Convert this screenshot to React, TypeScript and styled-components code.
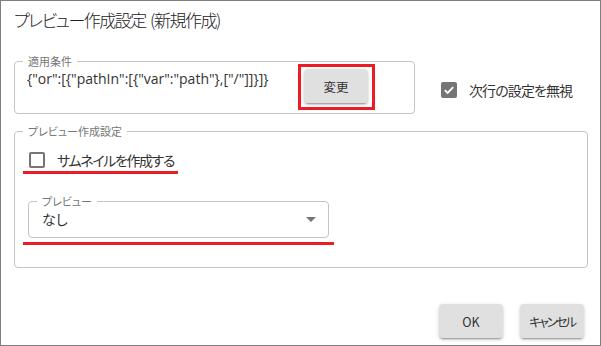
import React from "react";
import styled, { createGlobalStyle } from "styled-components";

const Global = createGlobalStyle`
  html, body { margin: 0; padding: 0; background: #fff; }
  body { font-family: "Noto Sans CJK JP", "Noto Sans", sans-serif; }
`;

const Frame = styled.div`
  width: 601px;
  height: 346px;
  box-sizing: border-box;
  border: 1px solid #7f7f7f;
  background: #fff;
  display: flex;
  flex-direction: column;
  color: #333;
  font-feature-settings: "palt" 1;
`;

const Title = styled.div`
  font-size: 17px;
  font-weight: 300;
  letter-spacing: -1.5px;
  word-spacing: 2px;
  line-height: 26px;
  padding: 6px 0 0 13px;
  color: #222;
`;

const TopRow = styled.div`
  display: flex;
  align-items: center;
  margin: 28px 0 0 13px;
`;

const Outlined = styled.div`
  position: relative;
  box-sizing: border-box;
  border: 1px solid #c4c4c4;
  border-radius: 4px;
`;

const Legend = styled.span`
  position: absolute;
  top: -8px;
  left: 8px;
  padding: 0 5px;
  background: #fff;
  font-size: 11px;
  line-height: 14px;
  color: #767676;
  white-space: nowrap;
`;

const ConditionBox = styled(Outlined)`
  width: 401px;
  height: 53px;
  display: flex;
  align-items: flex-start;
  padding: 0 39px 0 12px;
`;

const ConditionText = styled.span`
  padding-top: 7px;
  font-family: "Open Sans", "Noto Sans CJK JP", sans-serif;
  font-size: 14px;
  line-height: 20px;
  white-space: nowrap;
  color: #333;
`;

const Highlight = styled.div`
  margin-left: auto;
  margin-top: 2px;
  border: 3px solid #ed1c24;
  padding: 2px 4px 4px 3px;
  display: flex;
`;

const Button = styled.button<{ $spacing?: number }>`
  height: 34px;
  min-width: 64px;
  padding: 0 8px;
  border: none;
  border-radius: 4px;
  background: #e0e0e0;
  color: #333;
  font-family: "Noto Sans CJK JP", sans-serif;
  font-feature-settings: "palt" 1;
  font-size: 12.5px;
  letter-spacing: ${(p) => p.$spacing ?? 0}px;
  box-shadow: 0 3px 1px -2px rgba(0, 0, 0, 0.2), 0 2px 2px 0 rgba(0, 0, 0, 0.14),
    0 1px 5px 0 rgba(0, 0, 0, 0.12);
  cursor: pointer;
`;

const CheckLabel = styled.label<{ $spacing: number }>`
  display: flex;
  align-items: center;
  gap: 12px;
  font-size: 14px;
  letter-spacing: ${(p) => p.$spacing}px;
  line-height: 20px;
  color: #333;
  white-space: nowrap;
`;

const IgnoreGroup = styled.div`
  margin: 4px 0 0 26px;
`;

const Box = styled.span<{ $checked: boolean }>`
  width: 16px;
  height: 16px;
  box-sizing: border-box;
  border-radius: 2px;
  border: 2px solid #757575;
  background: ${(p) => (p.$checked ? "#757575" : "transparent")};
  display: flex;
  align-items: center;
  justify-content: center;
  flex: none;
`;

const SettingsBox = styled(Outlined)`
  margin: 17px 12px 0 13px;
  padding: 18px 0 22px 8px;
`;

const Underline = styled.div<{ $pad: string }>`
  width: fit-content;
  padding: ${(p) => p.$pad};
  border-bottom: 3px solid #ed1c24;
`;

const SelectWrap = styled(Underline)`
  margin-top: 27px;
`;

const Select = styled(Outlined)`
  width: 301px;
  height: 37px;
  display: flex;
  align-items: center;
  padding: 0 12px 2px 13px;
  font-size: 14px;
  color: #333;
`;

const Arrow = styled.svg`
  margin-left: auto;
  width: 24px;
  height: 24px;
  fill: #757575;
  margin-right: -7px;
`;

const Footer = styled.div`
  margin-top: auto;
  display: flex;
  justify-content: flex-end;
  gap: 17px;
  padding: 0 16px 7px 0;
`;

function Check({ checked }: { checked: boolean }) {
  return (
    <Box $checked={checked}>
      {checked && (
        <svg width="12" height="12" viewBox="0 0 12 12">
          <path d="M1.8 6.2 L4.6 9 L10.2 3.2" stroke="#fff" strokeWidth="1.8" fill="none" />
        </svg>
      )}
    </Box>
  );
}

export default function App() {
  return (
    <>
      <Global />
      <Frame>
        <Title>プレビュー作成設定 (新規作成)</Title>
        <TopRow>
          <ConditionBox>
            <Legend>適用条件</Legend>
            <ConditionText>{'{"or":[{"pathIn":[{"var":"path"},["/"]]}]}'}</ConditionText>
            <Highlight>
              <Button>変更</Button>
            </Highlight>
          </ConditionBox>
          <IgnoreGroup>
            <CheckLabel $spacing={-0.9}>
              <Check checked />
              次行の設定を無視
            </CheckLabel>
          </IgnoreGroup>
        </TopRow>
        <SettingsBox>
          <Legend>プレビュー作成設定</Legend>
          <Underline $pad="0 4px 1px 6px">
            <CheckLabel $spacing={-1.4}>
              <Check checked={false} />
              サムネイルを作成する
            </CheckLabel>
          </Underline>
          <SelectWrap $pad="0 5px 4px 5px">
            <Select>
              <Legend>プレビュー</Legend>
              なし
              <Arrow viewBox="0 0 24 24">
                <path d="M7 10l5 5 5-5z" />
              </Arrow>
            </Select>
          </SelectWrap>
        </SettingsBox>
        <Footer>
          <Button>OK</Button>
          <Button $spacing={-2.2}>キャンセル</Button>
        </Footer>
      </Frame>
    </>
  );
}
